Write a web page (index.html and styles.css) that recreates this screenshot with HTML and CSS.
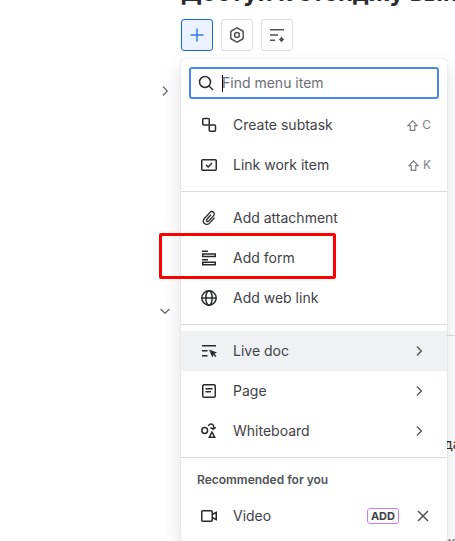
FILE: index.html
```html
<!DOCTYPE html>
<html lang="en">
<head>
<meta charset="UTF-8" />
<title>Work item</title>
<link rel="stylesheet" href="styles.css">
</head>
<body>

<main class="issue">
	<h1 class="title">Доступ к стенджу выпи</h1>

	<div class="toolbar">
		<button class="tool active"><svg width="16" height="16" viewBox="0 0 16 16"><path d="M8 1.500v13M1.500 8h13"/></svg></button>
		<button class="tool"><svg width="16" height="16" viewBox="0 0 16 16"><path d="M7.400 1.100 2.300 4a1 1 0 0 0-.5.9v6.200a1 1 0 0 0 .5.9l5.100 2.900a1 1 0 0 0 1.200 0l5.100-2.900a1 1 0 0 0 .5-.9V4.900a1 1 0 0 0-.5-.9L8.600 1.100a1 1 0 0 0-1.200 0z"/><circle cx="8" cy="8" r="2.400"/></svg></button>
		<button class="tool"><svg width="16" height="16" viewBox="0 0 16 16"><path d="M1 2.750h14M1 8h8M1 13.250h5"/><path class="fill" d="M12.500 8.700Q12.900 12.100 16 12.500 12.900 12.900 12.500 16 12.100 12.900 9 12.500 12.100 12.100 12.500 8.700z"/><circle class="fill" cx="12.500" cy="12.500" r="1.900"/></svg></button>

		<div class="menu">
			<label class="search">
				<svg width="16" height="16" viewBox="0 0 16 16"><circle cx="7" cy="7" r="5.500"/><path d="m11 11 4 4"/></svg>
				<span class="caret"></span><span class="placeholder">Find menu item</span>
			</label>

			<div class="group">
				<div class="item">
					<svg width="16" height="16" viewBox="0 0 16 16"><rect x="1.750" y="1.500" width="6.500" height="6.500" rx="1"/><rect x="8.250" y="8" width="6.250" height="6.250" rx="1"/></svg>
					<span class="label">Create subtask</span>
					<span class="key"><svg width="11" height="11" viewBox="0 0 11 11"><path d="M5.500.8.9 5.600h2.300v4.700h4.600V5.600h2.300z"/></svg>C</span>
				</div>
				<div class="item">
					<svg width="16" height="16" viewBox="0 0 16 16"><rect x=".75" y="2.750" width="14.500" height="10.500" rx="1"/><path d="m5 8 2.200 2L11 6"/></svg>
					<span class="label">Link work item</span>
					<span class="key"><svg width="11" height="11" viewBox="0 0 11 11"><path d="M5.500.8.9 5.600h2.300v4.700h4.600V5.600h2.300z"/></svg>K</span>
				</div>
			</div>

			<div class="group">
				<div class="item">
					<svg width="16" height="16" viewBox="0 0 16 16"><path class="thin" d="M13.500 7.800 8.800 12.900C7.300 14.600 5 15 3.500 13.600 2 12.200 2.100 10 3.600 8.300l5.200-5.700c1-1.100 2.700-1.200 3.700-.3s1 2.500 0 3.600L7.700 11c-.6.6-1.400.700-1.900.2s-.4-1.300.1-1.900L10 4.800"/></svg>
					<span class="label">Add attachment</span>
				</div>
				<div class="item">
					<svg width="16" height="16" viewBox="0 0 16 16"><path d="M1 1.250h6M1 9.750h6M1.750 4h12.500v2.500H1.750zM1.750 12.250h12.500v2.500H1.750z"/></svg>
					<span class="label">Add form</span>
					<span class="highlight"></span>
				</div>
				<div class="item">
					<svg width="16" height="16" viewBox="0 0 16 16"><circle cx="8" cy="8" r="7.200"/><ellipse cx="8" cy="8" rx="3.200" ry="7.200"/><path d="M.8 8h14.400"/></svg>
					<span class="label">Add web link</span>
				</div>
			</div>

			<div class="group">
				<div class="item hover">
					<svg width="16" height="16" viewBox="0 0 16 16"><path d="M1 2.750h14M1 7.750h5.500M1 12.750h5.500"/><path class="fill" d="m8 6.500 8 3-3.300 1.700-1.400 3.300z"/><path d="m12 10.500 3 3"/></svg>
					<span class="label">Live doc</span>
					<svg class="chevron" width="8" height="12" viewBox="0 0 8 12"><path d="m2 1.500 4.300 4.500L2 10.500"/></svg>
				</div>
				<div class="item">
					<svg width="16" height="16" viewBox="0 0 16 16"><rect x="1.750" y="1.750" width="12.500" height="12.500" rx="1.300"/><path d="M4.500 5.750h7M4.500 8.750h5.500"/></svg>
					<span class="label">Page</span>
					<svg class="chevron" width="8" height="12" viewBox="0 0 8 12"><path d="m2 1.500 4.300 4.500L2 10.500"/></svg>
				</div>
				<div class="item">
					<svg width="16" height="16" viewBox="0 0 16 16"><circle cx="3.700" cy="7.500" r="2.900"/><path d="M7.300 3C8.300.5 11.600.5 12.500 2.700c.4 1.200.1 2.100-.4 3.100M9.300 4.700l2.800 1.400 2.700-1.700M11 9.200l-2.700 5h5.400z"/></svg>
					<span class="label">Whiteboard</span>
					<svg class="chevron" width="8" height="12" viewBox="0 0 8 12"><path d="m2 1.500 4.300 4.500L2 10.500"/></svg>
				</div>
			</div>

			<div class="group">
				<h2 class="heading">Recommended for you</h2>
				<div class="item">
					<svg width="16" height="16" viewBox="0 0 16 16"><rect x=".75" y="2.750" width="10.500" height="10.500" rx="1"/><path d="m11.500 6.300 3.750-1.800v7l-3.750-1.800"/></svg>
					<span class="label">Video</span>
					<span class="badge">ADD</span>
					<svg class="close" width="12" height="12" viewBox="0 0 12 12"><path d="m1 1 10 10M11 1 1 11"/></svg>
				</div>
			</div>
		</div>
	</div>
</main>

<div class="page-behind">
	<svg class="section-arrow" width="8" height="12" viewBox="0 0 8 12"><path d="m2 1.500 4.300 4.500L2 10.500"/></svg>
	<svg class="section-arrow" width="12" height="8" viewBox="0 0 12 8"><path d="M1.500 2 6 6.300 10.500 2"/></svg>
	<div class="details">
		<p>да</p>
		<p class="muted">ис</p>
	</div>
</div>

</body>
</html>
```
FILE: styles.css
```css
html
{
	overflow: hidden;
}

body
{
	margin: 0;
	height: 541px;
	overflow: hidden;
	font-family: Inter, "Liberation Sans", sans-serif;
	font-size: 14px;
	line-height: 20px;
	color: #3f4146;
	background: #fff;
}

svg
{
	flex: none;
	fill: none;
	stroke: currentColor;
	stroke-width: 1.5;
}

svg .fill
{
	fill: currentColor;
	stroke: none;
}

svg .thin
{
	stroke-width: 1.3;
}

.issue
{
	padding-left: 181px;
}

.title
{
	margin: -21px 0 12px;
	font-size: 24px;
	line-height: 28px;
	font-weight: 700;
	color: #292a2e;
	white-space: nowrap;
}

.toolbar
{
	position: relative;
	display: flex;
	gap: 8px;
}

.tool
{
	display: flex;
	align-items: center;
	justify-content: center;
	width: 32px;
	height: 32px;
	padding: 0;
	border: 1px solid #dddee1;
	border-radius: 3px;
	color: #505258;
	background: #fff;
}

.tool.active
{
	border-color: #1868db;
	color: #357de8;
	background: #e9f2fe;
}

.menu
{
	position: absolute;
	z-index: 1;
	top: 40px;
	left: 0;
	width: 266px;
	height: 483px;
	border-radius: 4px;
	background: #fff;
	box-shadow: 0 8px 18px rgba(30, 31, 33, .15), 0 0 1px rgba(30, 31, 33, .31);
}

.search
{
	display: flex;
	align-items: center;
	box-sizing: border-box;
	height: 32px;
	margin: 8px 8px 0;
	padding-left: 7px;
	border: 2px solid #4688ec;
	border-radius: 3px;
	color: #6b6e76;
}

.search svg
{
	color: #292a2e;
}

.caret
{
	width: 1px;
	height: 17px;
	margin-left: 8px;
	background: #000;
}

.placeholder
{
	margin-left: -1px;
}

.group
{
	padding: 6px 0;
}

.group + .group
{
	border-top: 1px solid #d9dadd;
}

.item
{
	position: relative;
	display: flex;
	align-items: center;
	height: 40px;
	padding: 0 16px 0 20px;
}

.item > svg
{
	color: #292a2e;
}

.item.hover
{
	background: #f0f1f2;
}

.label
{
	flex: 1;
	margin-left: 16px;
}

.key
{
	display: flex;
	align-items: center;
	gap: 4px;
	font-size: 12px;
	color: #7d7f85;
}

.key svg
{
	stroke-width: 1.2;
}

.item .chevron
{
	margin-right: 8px;
	color: #5c5e64;
}

.item .close
{
	margin: 0 2px 0 18px;
	color: #505258;
}

.badge
{
	box-sizing: border-box;
	height: 16px;
	padding: 0 3px;
	border: 1px solid #c97cf4;
	border-radius: 3px;
	font-size: 11px;
	line-height: 14px;
	font-weight: 700;
}

.heading
{
	margin: 0;
	padding: 8px 16px;
	font-size: 12px;
	line-height: 16px;
	font-weight: 600;
	color: #505258;
}

.highlight
{
	position: absolute;
	top: -5px;
	left: -22px;
	box-sizing: border-box;
	width: 177px;
	height: 46px;
	border: 3px solid #f00;
	border-radius: 2px;
}

.page-behind
{
	display: grid;
	grid-template-columns: 159px 287px 1fr;
	grid-template-rows: 220px 1fr;
	padding-top: 34px;
	color: #6b6e76;
}

.section-arrow
{
	grid-column: 1;
	margin-left: 161px;
	stroke-width: 1.3;
}

.section-arrow + .section-arrow
{
	margin: 2px 0 0 159px;
}

.details
{
	grid-column: 3;
	grid-row: 2;
	margin-top: 30px;
	padding-top: 98px;
	border-top: 1px solid #dddee1;
	white-space: nowrap;
	color: #292a2e;
}

.details p
{
	margin: 0 0 78px -2px;
}

.details .muted
{
	margin-bottom: 0;
	font-size: 12px;
	color: #6b6e76;
}
```
